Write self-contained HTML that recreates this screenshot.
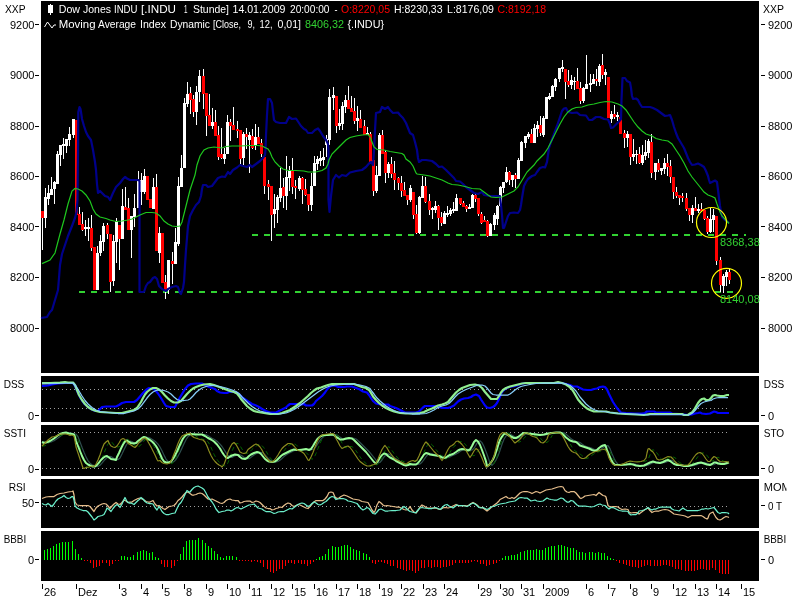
<!DOCTYPE html>
<html><head><meta charset="utf-8"><title>Chart</title>
<style>
html,body{margin:0;padding:0;background:#fff;}
body{width:800px;height:600px;overflow:hidden;}
svg{display:block;will-change:transform;}
text{font-family:"Liberation Sans",sans-serif;font-size:11px;}
</style></head><body>
<svg width="800" height="600" viewBox="0 0 800 600">
<rect x="0" y="0" width="800" height="600" fill="#fff"/>
<g shape-rendering="crispEdges" fill="#000">
<rect x="41" y="1" width="718" height="372"/>
<rect x="41" y="376" width="718" height="46"/>
<rect x="41" y="425" width="718" height="50.5"/>
<rect x="41" y="479" width="718" height="48.799999999999955"/>
<rect x="41" y="531" width="718" height="49.60000000000002"/>
</g>
<g stroke="#32d232" stroke-width="2" shape-rendering="crispEdges" fill="none">
<path d="M252 235H746" stroke-dasharray="6,6"/>
<path d="M79 292H735" stroke-dasharray="6,6"/>
</g>
<g shape-rendering="crispEdges">
<path d="M45.5 188V228M48.5 185V205M51.5 177V195M54.5 181V204M57.5 151V184M60.5 145V166M63.5 138V159M66.5 139V153M69.5 127V146M73.5 119V138M85.5 220V236M88.5 218V241M97.5 246V290M100.5 235V256M103.5 223V251M113.5 235V286M116.5 218V263M122.5 189V239M131.5 216V258M134.5 194V227M138.5 171V208M141.5 173V205M144.5 169V194M153.5 178V209M159.5 227V263M168.5 260V294M175.5 228V264M178.5 177V246M181.5 155V187M184.5 98V168M187.5 82V107M196.5 86V125M199.5 70V102M212.5 108V129M224.5 148V164M227.5 115V154M243.5 132V165M249.5 132V173M255.5 124V150M274.5 194V228M277.5 195V223M280.5 168V202M286.5 156V210M289.5 166V191M299.5 176V191M311.5 173V211M314.5 156V186M317.5 156V170M320.5 151V166M323.5 148V166M326.5 135V157M329.5 89V145M333.5 87V110M339.5 109V130M342.5 102V130M345.5 95V113M357.5 106V131M367.5 127V135M376.5 166V193M379.5 133V176M388.5 162V178M410.5 185V202M419.5 196V234M422.5 176V198M432.5 207V219M435.5 201V213M444.5 211V224M447.5 206V217M450.5 208V216M453.5 202V213M456.5 194V211M469.5 204V209M472.5 194V208M490.5 223V236M494.5 213V230M497.5 205V225M500.5 186V207M503.5 182V193M506.5 167V183M512.5 175V187M518.5 158V179M521.5 141V161M525.5 136V148M528.5 132V139M534.5 124V143M537.5 121V137M543.5 116V137M546.5 97V119M549.5 93V100M552.5 85V97M555.5 78V91M559.5 68V82M562.5 60V72M571.5 75V89M574.5 77V90M583.5 87V103M586.5 55V89M590.5 74V92M593.5 74V84M599.5 64V86M605.5 69V85M611.5 111V123M617.5 112V121M627.5 131V147M633.5 139V161M636.5 150V164M642.5 145V165M645.5 140V160M648.5 139V158M655.5 163V180M661.5 168V175M664.5 158V174M692.5 205V223M698.5 204V213M710.5 208V233M713.5 209V232M723.5 274V293M726.5 270V286M42.5 211V250M76.5 120V215M79.5 207V225M82.5 212V231M91.5 215V251M94.5 247V290M107.5 223V239M110.5 234V292M119.5 225V270M125.5 187V210M128.5 198V230M147.5 176V200M150.5 199V208M156.5 174V251M162.5 233V283M165.5 275V299M172.5 252V284M190.5 87V114M193.5 95V117M203.5 69V109M206.5 93V136M209.5 94V126M215.5 110V136M218.5 126V160M221.5 128V159M230.5 119V141M233.5 107V130M237.5 121V138M240.5 130V164M246.5 128V149M252.5 129V149M258.5 127V144M261.5 139V157M264.5 157V194M268.5 180V200M271.5 186V241M283.5 178V208M292.5 158V194M295.5 180V199M302.5 177V204M305.5 179V196M308.5 194V211M336.5 96V133M348.5 86V109M351.5 96V112M354.5 98V124M360.5 110V128M364.5 120V135M370.5 132V164M373.5 160V196M382.5 130V154M385.5 150V183M391.5 157V178M394.5 161V190M398.5 177V190M401.5 176V197M404.5 182V196M407.5 195V205M413.5 192V219M416.5 205V234M425.5 177V203M429.5 194V215M438.5 205V230M441.5 212V226M460.5 198V205M463.5 201V207M466.5 205V212M475.5 194V202M478.5 198V216M481.5 212V224M484.5 216V222M487.5 220V237M509.5 171V185M515.5 173V188M531.5 129V143M540.5 116V136M565.5 69V99M568.5 70V87M577.5 68V89M580.5 82V104M596.5 69V86M602.5 54V79M608.5 77V118M614.5 105V119M620.5 117V134M624.5 130V148M630.5 134V165M639.5 147V164M651.5 134V178M658.5 159V172M667.5 154V176M670.5 160V183M673.5 177V199M676.5 187V198M679.5 195V205M682.5 193V202M686.5 193V211M689.5 208V221M695.5 197V211M701.5 203V212M704.5 210V220M707.5 216V234M716.5 216V265M720.5 257V292M729.5 269V284" stroke="#fff" stroke-width="1" fill="none"/>
<path d="M44 197h3V218h-3zM47 193h3V199h-3zM50 189h3V195h-3zM53 182h3V189h-3zM56 154h3V184h-3zM59 145h3V155h-3zM62 144h3V146h-3zM65 139h3V146h-3zM68 134h3V140h-3zM72 119h3V135h-3zM84 227h3V229h-3zM87 227h3V229h-3zM96 253h3V290h-3zM99 241h3V253h-3zM102 226h3V242h-3zM112 241h3V281h-3zM115 221h3V242h-3zM121 206h3V239h-3zM130 216h3V230h-3zM133 208h3V217h-3zM137 180h3V208h-3zM140 180h3V192h-3zM143 176h3V192h-3zM152 187h3V209h-3zM158 233h3V253h-3zM167 260h3V290h-3zM174 242h3V264h-3zM177 186h3V244h-3zM180 168h3V187h-3zM183 103h3V168h-3zM186 94h3V104h-3zM195 92h3V112h-3zM198 76h3V92h-3zM211 122h3V126h-3zM223 154h3V159h-3zM226 122h3V154h-3zM242 134h3V158h-3zM248 135h3V140h-3zM254 137h3V145h-3zM273 209h3V214h-3zM276 197h3V210h-3zM279 188h3V198h-3zM285 177h3V196h-3zM288 170h3V178h-3zM298 178h3V189h-3zM310 186h3V205h-3zM313 163h3V186h-3zM316 159h3V164h-3zM319 158h3V161h-3zM322 157h3V160h-3zM325 139h3V145h-3zM328 97h3V140h-3zM332 95h3V98h-3zM338 123h3V126h-3zM341 106h3V124h-3zM344 100h3V107h-3zM356 118h3V121h-3zM366 133h3V135h-3zM375 175h3V191h-3zM378 135h3V176h-3zM387 164h3V173h-3zM409 188h3V200h-3zM418 197h3V233h-3zM421 186h3V198h-3zM431 208h3V210h-3zM434 206h3V210h-3zM443 213h3V224h-3zM446 213h3V215h-3zM449 210h3V214h-3zM452 209h3V211h-3zM455 198h3V211h-3zM468 207h3V209h-3zM471 195h3V208h-3zM489 224h3V236h-3zM493 215h3V225h-3zM496 206h3V219h-3zM499 187h3V206h-3zM502 182h3V188h-3zM505 172h3V182h-3zM511 175h3V180h-3zM517 160h3V179h-3zM520 142h3V161h-3zM524 136h3V143h-3zM527 134h3V137h-3zM533 128h3V143h-3zM536 125h3V129h-3zM542 118h3V135h-3zM545 97h3V119h-3zM548 96h3V99h-3zM551 86h3V97h-3zM554 79h3V87h-3zM558 68h3V79h-3zM561 67h3V69h-3zM570 80h3V85h-3zM573 81h3V82h-3zM582 88h3V101h-3zM585 84h3V89h-3zM589 83h3V85h-3zM592 79h3V84h-3zM598 66h3V82h-3zM604 72h3V75h-3zM610 114h3V119h-3zM616 115h3V117h-3zM626 134h3V138h-3zM632 154h3V157h-3zM635 154h3V155h-3zM641 155h3V163h-3zM644 152h3V156h-3zM647 141h3V153h-3zM654 163h3V172h-3zM660 168h3V171h-3zM663 163h3V169h-3zM691 208h3V215h-3zM697 209h3V211h-3zM709 219h3V232h-3zM712 215h3V220h-3zM722 276h3V286h-3zM725 272h3V277h-3z" fill="#fff"/>
<path d="M41 211h3V218h-3zM75 120h3V215h-3zM78 214h3V225h-3zM81 224h3V230h-3zM90 228h3V248h-3zM93 247h3V290h-3zM106 225h3V234h-3zM109 234h3V282h-3zM118 225h3V239h-3zM124 207h3V210h-3zM127 208h3V230h-3zM146 176h3V200h-3zM149 199h3V208h-3zM155 187h3V251h-3zM161 233h3V283h-3zM164 282h3V290h-3zM171 261h3V264h-3zM189 93h3V100h-3zM192 99h3V112h-3zM202 76h3V94h-3zM205 93h3V116h-3zM208 115h3V126h-3zM214 122h3V136h-3zM217 135h3V157h-3zM220 154h3V158h-3zM229 122h3V126h-3zM232 125h3V130h-3zM236 129h3V131h-3zM239 130h3V159h-3zM245 134h3V137h-3zM251 136h3V148h-3zM257 137h3V144h-3zM260 143h3V154h-3zM263 157h3V186h-3zM267 184h3V187h-3zM270 186h3V215h-3zM282 187h3V196h-3zM291 170h3V187h-3zM294 186h3V188h-3zM301 178h3V190h-3zM304 189h3V195h-3zM307 194h3V205h-3zM335 96h3V126h-3zM347 100h3V109h-3zM350 108h3V112h-3zM353 111h3V121h-3zM359 119h3V128h-3zM363 126h3V135h-3zM369 134h3V164h-3zM372 160h3V191h-3zM381 135h3V154h-3zM384 152h3V173h-3zM390 164h3V174h-3zM393 173h3V180h-3zM397 178h3V183h-3zM400 183h3V191h-3zM403 190h3V196h-3zM406 195h3V200h-3zM412 192h3V215h-3zM415 214h3V233h-3zM424 186h3V202h-3zM428 201h3V210h-3zM437 206h3V218h-3zM440 217h3V223h-3zM459 198h3V204h-3zM462 203h3V207h-3zM465 206h3V209h-3zM474 195h3V199h-3zM477 198h3V214h-3zM480 214h3V223h-3zM483 220h3V222h-3zM486 221h3V236h-3zM508 172h3V180h-3zM514 175h3V179h-3zM530 134h3V143h-3zM539 125h3V133h-3zM564 69h3V82h-3zM567 81h3V85h-3zM576 81h3V89h-3zM579 88h3V101h-3zM595 79h3V81h-3zM601 65h3V75h-3zM607 77h3V118h-3zM613 114h3V117h-3zM619 117h3V134h-3zM623 133h3V138h-3zM629 134h3V157h-3zM638 154h3V163h-3zM650 142h3V173h-3zM657 163h3V170h-3zM666 163h3V167h-3zM669 166h3V177h-3zM672 177h3V192h-3zM675 192h3V196h-3zM678 195h3V198h-3zM681 196h3V198h-3zM685 198h3V209h-3zM688 208h3V215h-3zM694 208h3V211h-3zM700 209h3V211h-3zM703 210h3V219h-3zM706 218h3V232h-3zM715 216h3V261h-3zM719 260h3V285h-3zM728 272h3V280h-3z" fill="#f00"/>
</g>
<path d="M41 318 L47 317 L50 312 L52 310 L55 300 L58 290 L59 278 L60 265 L62 254 L64 248 L68 236 L72 226 L75 218 L76.5 212 L77.5 200 L78 150 L78.3 112 L79.5 107 L80.5 109 L81 112 L82 119 L84 126 L86 132 L88 136 L91 140 L93 150 L95 162 L96 170 L97 184 L98 193 L100 191 L102 193 L105 196 L108 197 L110 200 L113 193 L116 187 L120 183 L123 179 L125 177 L127 178.5 L130 180 L134 180 L138 180 L139.5 181 L139.5 292 L141 292 L144 292 L146 286 L148 283 L150 282 L153 278 L155 277 L157 279 L159 286 L162 289 L166 291 L168 289 L172 287 L176 286 L178 287 L180 293 L181 294 L183 288 L184 282 L185 265 L186 250 L187 238 L188 226 L190 216 L193 210 L196 205 L199 202 L201 196 L202 189 L203 185 L206 185 L208 187 L212 186 L215 182 L218 178 L222 176.5 L225 177 L228 172 L230 174 L233 170 L237 167.5 L240 165 L243 166 L247 167 L250 165 L252 167 L256 164 L260 161 L263 158 L265 155 L265.5 150 L266 135 L267 115 L268 99 L270 99 L272 103 L273 112 L274 120 L276 122 L280 123 L286 123 L289 117 L292 119 L296 118.5 L299 123 L301 126 L304 129 L306 130 L308 133 L312 133 L315 130 L318 128.5 L320 131 L323 136 L326 140 L328 144 L328.5 150 L328.5 200 L329.5 212 L331 196 L332 188 L333 180 L336 175 L339 177.5 L342 175 L346 176 L350 172.5 L356 171 L362 170 L366 167 L369 163.5 L371 162 L373 165 L374 150 L375 130 L376 113 L380 112 L382 107 L385 109 L388 107 L390 110 L393 113 L398 112.5 L400 115 L403 118 L406 123 L408 128 L410 133 L413 135 L415 142 L417 150 L418 158 L419 162 L422 160 L426 160 L432 161 L436 164 L439 167 L442 166.5 L446 170 L450 174 L454 178 L456 181 L460 181.5 L463 184 L466 187 L470 190 L474 193 L478 194 L482 192 L484 195 L490 196 L496 196 L500 196 L501 205 L502 215 L503 228 L504 228 L506 222 L508 216 L510 213 L514 212.5 L518 213 L520 210 L521 205 L522 198 L523 192 L524 186 L526 182 L528 179 L532 176 L535 175 L537 172 L540 168 L543 167 L545 167.5 L547 162 L548 155 L549 148 L551 142 L554 134 L557 126 L560 117 L562 111 L564 108.5 L566 108 L568 112 L572 113 L577 112.5 L580 115 L586 115.5 L589 120 L592 120 L596 117 L600 117 L604 119 L608 119.5 L610 124 L611 128 L613 127.5 L616 124.5 L619 121.5 L621 119 L621.5 100 L622.5 78 L625 78 L627 81 L630 82.5 L631 88 L632 96 L633 99 L636 98.5 L638 100 L640 104 L642 107 L646 107 L650 107 L653 108 L657 110 L661 113 L665 116 L668 115.5 L670 115 L672 120 L674 127 L676 133 L678 138 L681 143 L684 148 L686 153 L688 158 L690 162 L692 165 L695 164.5 L698 163.5 L701 165 L704 167 L706 171 L708 176 L709 180 L710 183 L712 182 L715 180.5 L717 182 L718 190 L719 198 L720 206 L721 212 L722 217 L724 219 L726 220.5 L729 223" stroke="#00008b" stroke-width="2.2" fill="none" stroke-linejoin="round"/>
<path d="M42 263.6 L50 260 L55 253 L60 234 L64 220 L68 204 L72 191 L75 188.5 L78 189 L82 191 L86 195 L90 201 L93 209 L96 214 L100 217 L106 218.5 L110 220 L116 221.5 L122 221 L128 220 L132 219 L136 217 L140 215 L146 212.5 L152 212.5 L156 213 L160 216 L164 221 L168 224 L172 226 L176 226.5 L180 226 L182 222 L184 214 L187 202 L190 190 L195 175 L197 165 L200 156 L204 150 L208 148 L214 147 L222 148 L226 146.5 L232 146 L240 146 L250 145.5 L258 145.5 L262 146 L266 148 L268 149 L270 152 L272 157 L275 162 L279 166 L283 169 L288 170.5 L296 170.5 L304 171 L308 172 L316 172 L322 170.5 L326 168 L328 164 L329 160 L332 154 L336 150 L342 144 L346 140 L350 137.5 L356 136 L362 135 L368 134.5 L370 137 L372 142 L374 147 L377 149.5 L384 150 L390 151.5 L396 152.5 L402 153.5 L404 155 L406 159 L410 162 L413 166 L416 173 L417 174 L424 175 L430 176 L436 178 L442 180 L448 183 L452 184.5 L458 185 L465 186.5 L472 188.5 L480 189 L484 192 L488 195 L491 197 L496 197.5 L502 197 L506 195 L510 193 L514 191 L518 187 L521 182 L524 177 L527 172 L530 169 L534 165 L537 161 L540 158 L544 154 L548 148 L552 140 L556 132 L560 124 L564 117 L568 112 L572 109 L576 107.5 L582 107 L588 105 L594 104 L600 102.5 L606 101.5 L612 102 L618 104 L622 106 L626 110 L630 116 L634 122 L638 127 L642 131 L646 134 L652 136 L656 138.5 L662 140 L668 141 L672 144 L676 150 L680 156 L684 163 L688 171 L692 177 L696 182 L700 187 L704 192 L708 195 L712 196.5 L715 198 L717 204 L720 212 L722 216 L725 219 L729 223.5" stroke="#1ec81e" stroke-width="1.2" fill="none"/>
<circle cx="711.5" cy="222.5" r="15" stroke="#ffff00" stroke-width="1.2" fill="none"/>
<circle cx="726.5" cy="283.3" r="15" stroke="#ffff00" stroke-width="1.2" fill="none"/>
<text x="720" y="246" fill="#32d232">8368,38</text>
<text x="720" y="303" fill="#32d232">8140,08</text>
<rect x="48" y="5" width="5" height="8" fill="#fff" shape-rendering="crispEdges"/><rect x="50" y="4" width="1" height="11" fill="#fff" shape-rendering="crispEdges"/>
<text x="58.75" y="13" fill="#fff" textLength="21.25" lengthAdjust="spacingAndGlyphs">Dow</text>
<text x="83" y="13" fill="#fff" textLength="28" lengthAdjust="spacingAndGlyphs">Jones</text>
<text x="114" y="13" fill="#fff" textLength="23.5" lengthAdjust="spacingAndGlyphs">INDU</text>
<text x="141" y="13" fill="#fff" textLength="35" lengthAdjust="spacingAndGlyphs">[.INDU</text>
<text x="184" y="13" fill="#fff" textLength="3.5" lengthAdjust="spacingAndGlyphs">1</text>
<text x="193" y="13" fill="#fff" textLength="36" lengthAdjust="spacingAndGlyphs">Stunde]</text>
<text x="232.5" y="13" fill="#fff" textLength="53" lengthAdjust="spacingAndGlyphs">14.01.2009</text>
<text x="290" y="13" fill="#fff" textLength="39.5" lengthAdjust="spacingAndGlyphs">20:00:00</text>
<text x="334.5" y="13" fill="#fff" textLength="3" lengthAdjust="spacingAndGlyphs">-</text>
<text x="341" y="13" fill="#f00" textLength="49" lengthAdjust="spacingAndGlyphs">O:8220,05</text>
<text x="394" y="13" fill="#fff" textLength="48.5" lengthAdjust="spacingAndGlyphs">H:8230,33</text>
<text x="447" y="13" fill="#fff" textLength="47" lengthAdjust="spacingAndGlyphs">L:8176,09</text>
<text x="497.5" y="13" fill="#f00" textLength="48.5" lengthAdjust="spacingAndGlyphs">C:8192,18</text>
<path d="M44.5 27 l3 -5 l4.5 6 l2 -3 l2 0" stroke="#fff" stroke-width="1" fill="none"/>
<text x="58.75" y="28.4" fill="#fff" textLength="36.75" lengthAdjust="spacingAndGlyphs">Moving</text>
<text x="98" y="28.4" fill="#fff" textLength="38" lengthAdjust="spacingAndGlyphs">Average</text>
<text x="140" y="28.4" fill="#fff" textLength="26" lengthAdjust="spacingAndGlyphs">Index</text>
<text x="170" y="28.4" fill="#fff" textLength="40" lengthAdjust="spacingAndGlyphs">Dynamic</text>
<text x="213" y="28.4" fill="#fff" textLength="28" lengthAdjust="spacingAndGlyphs">[Close,</text>
<text x="247.5" y="28.4" fill="#fff" textLength="7.5" lengthAdjust="spacingAndGlyphs">9,</text>
<text x="259.5" y="28.4" fill="#fff" textLength="13" lengthAdjust="spacingAndGlyphs">12,</text>
<text x="277.5" y="28.4" fill="#fff" textLength="23.5" lengthAdjust="spacingAndGlyphs">0,01]</text>
<text x="305" y="28.4" fill="#32d232" textLength="39" lengthAdjust="spacingAndGlyphs">8406,32</text>
<text x="347.5" y="28.4" fill="#fff" textLength="36.5" lengthAdjust="spacingAndGlyphs">{.INDU}</text>
<g fill="#000">
<text x="5" y="13" textLength="20.5" lengthAdjust="spacingAndGlyphs">XXP</text><text x="763" y="13" textLength="21" lengthAdjust="spacingAndGlyphs">XXP</text>
<text x="10" y="28.5">9200</text><rect x="35" y="24" width="4" height="1" shape-rendering="crispEdges"/>
<text x="768" y="28.5">9200</text><rect x="761" y="24" width="4" height="1" shape-rendering="crispEdges"/>
<text x="10" y="79.0">9000</text><rect x="35" y="75" width="4" height="1" shape-rendering="crispEdges"/>
<text x="768" y="79.0">9000</text><rect x="761" y="75" width="4" height="1" shape-rendering="crispEdges"/>
<text x="10" y="129.5">8800</text><rect x="35" y="126" width="4" height="1" shape-rendering="crispEdges"/>
<text x="768" y="129.5">8800</text><rect x="761" y="126" width="4" height="1" shape-rendering="crispEdges"/>
<text x="10" y="180.0">8600</text><rect x="35" y="176" width="4" height="1" shape-rendering="crispEdges"/>
<text x="768" y="180.0">8600</text><rect x="761" y="176" width="4" height="1" shape-rendering="crispEdges"/>
<text x="10" y="230.5">8400</text><rect x="35" y="226" width="4" height="1" shape-rendering="crispEdges"/>
<text x="768" y="230.5">8400</text><rect x="761" y="226" width="4" height="1" shape-rendering="crispEdges"/>
<text x="10" y="281.0">8200</text><rect x="35" y="277" width="4" height="1" shape-rendering="crispEdges"/>
<text x="768" y="281.0">8200</text><rect x="761" y="277" width="4" height="1" shape-rendering="crispEdges"/>
<text x="10" y="331.5">8000</text><rect x="35" y="328" width="4" height="1" shape-rendering="crispEdges"/>
<text x="768" y="331.5">8000</text><rect x="761" y="328" width="4" height="1" shape-rendering="crispEdges"/>
<text x="3.7" y="388" textLength="20.6" lengthAdjust="spacingAndGlyphs">DSS</text><text x="763.7" y="388" textLength="20.6" lengthAdjust="spacingAndGlyphs">DSS</text>
<text x="28" y="420">0</text><rect x="35" y="415" width="4" height="1" shape-rendering="crispEdges"/>
<text x="768" y="420">0</text><rect x="761" y="415" width="4" height="1" shape-rendering="crispEdges"/>
<text x="3.7" y="437" textLength="22.3" lengthAdjust="spacingAndGlyphs">SSTI</text><text x="763.7" y="437" textLength="20.5" lengthAdjust="spacingAndGlyphs">STO</text>
<text x="28" y="473">0</text><rect x="35" y="469" width="4" height="1" shape-rendering="crispEdges"/>
<text x="768" y="473">0</text><rect x="761" y="468" width="4" height="1" shape-rendering="crispEdges"/>
<text x="8.7" y="491" textLength="17" lengthAdjust="spacingAndGlyphs">RSI</text><text x="763.7" y="491" textLength="27" lengthAdjust="spacingAndGlyphs">MOM</text>
<text x="22" y="507">50</text><rect x="35" y="502" width="4" height="1" shape-rendering="crispEdges"/>
<text x="768" y="510" textLength="14" lengthAdjust="spacingAndGlyphs">0 T</text><rect x="761" y="505" width="4" height="1" shape-rendering="crispEdges"/>
<text x="3.7" y="543" textLength="22.5" lengthAdjust="spacingAndGlyphs">BBBI</text><text x="763.7" y="543" textLength="22.5" lengthAdjust="spacingAndGlyphs">BBBI</text>
<text x="28" y="564">0</text><rect x="35" y="559" width="4" height="1" shape-rendering="crispEdges"/>
<text x="768" y="564">0</text><rect x="761" y="559" width="4" height="1" shape-rendering="crispEdges"/>
<rect x="42" y="584" width="1" height="5" shape-rendering="crispEdges"/><text x="44" y="596.4">26</text>
<rect x="76" y="584" width="1" height="5" shape-rendering="crispEdges"/><text x="78" y="596.4">Dez</text>
<rect x="119" y="584" width="1" height="5" shape-rendering="crispEdges"/><text x="121" y="596.4">3</text>
<rect x="141" y="584" width="1" height="5" shape-rendering="crispEdges"/><text x="143" y="596.4">4</text>
<rect x="162" y="584" width="1" height="5" shape-rendering="crispEdges"/><text x="164" y="596.4">5</text>
<rect x="184" y="584" width="1" height="5" shape-rendering="crispEdges"/><text x="186" y="596.4">8</text>
<rect x="206" y="584" width="1" height="5" shape-rendering="crispEdges"/><text x="208" y="596.4">9</text>
<rect x="227" y="584" width="1" height="5" shape-rendering="crispEdges"/><text x="229" y="596.4">10</text>
<rect x="249" y="584" width="1" height="5" shape-rendering="crispEdges"/><text x="251" y="596.4">11</text>
<rect x="271" y="584" width="1" height="5" shape-rendering="crispEdges"/><text x="273" y="596.4">12</text>
<rect x="292" y="584" width="1" height="5" shape-rendering="crispEdges"/><text x="294" y="596.4">15</text>
<rect x="314" y="584" width="1" height="5" shape-rendering="crispEdges"/><text x="316" y="596.4">16</text>
<rect x="336" y="584" width="1" height="5" shape-rendering="crispEdges"/><text x="338" y="596.4">17</text>
<rect x="357" y="584" width="1" height="5" shape-rendering="crispEdges"/><text x="359" y="596.4">18</text>
<rect x="379" y="584" width="1" height="5" shape-rendering="crispEdges"/><text x="381" y="596.4">19</text>
<rect x="401" y="584" width="1" height="5" shape-rendering="crispEdges"/><text x="403" y="596.4">22</text>
<rect x="423" y="584" width="1" height="5" shape-rendering="crispEdges"/><text x="425" y="596.4">23</text>
<rect x="444" y="584" width="1" height="5" shape-rendering="crispEdges"/><text x="446" y="596.4">24</text>
<rect x="478" y="584" width="1" height="5" shape-rendering="crispEdges"/><text x="480" y="596.4">29</text>
<rect x="500" y="584" width="1" height="5" shape-rendering="crispEdges"/><text x="502" y="596.4">30</text>
<rect x="521" y="584" width="1" height="5" shape-rendering="crispEdges"/><text x="523" y="596.4">31</text>
<rect x="543" y="584" width="1" height="5" shape-rendering="crispEdges"/><text x="545" y="596.4">2009</text>
<rect x="586" y="584" width="1" height="5" shape-rendering="crispEdges"/><text x="588" y="596.4">6</text>
<rect x="608" y="584" width="1" height="5" shape-rendering="crispEdges"/><text x="610" y="596.4">7</text>
<rect x="630" y="584" width="1" height="5" shape-rendering="crispEdges"/><text x="632" y="596.4">8</text>
<rect x="651" y="584" width="1" height="5" shape-rendering="crispEdges"/><text x="653" y="596.4">9</text>
<rect x="673" y="584" width="1" height="5" shape-rendering="crispEdges"/><text x="675" y="596.4">12</text>
<rect x="695" y="584" width="1" height="5" shape-rendering="crispEdges"/><text x="697" y="596.4">13</text>
<rect x="716" y="584" width="1" height="5" shape-rendering="crispEdges"/><text x="718" y="596.4">14</text>
<rect x="741" y="584" width="1" height="5" shape-rendering="crispEdges"/><text x="743" y="596.4">15</text>
</g>
<rect x="786.5" y="480" width="13.5" height="14" fill="#fff"/>
<path d="M42 389h1v1h-1zM46 389h1v1h-1zM50 389h1v1h-1zM54 389h1v1h-1zM58 389h1v1h-1zM62 389h1v1h-1zM66 389h1v1h-1zM70 389h1v1h-1zM74 389h1v1h-1zM78 389h1v1h-1zM82 389h1v1h-1zM86 389h1v1h-1zM90 389h1v1h-1zM94 389h1v1h-1zM98 389h1v1h-1zM102 389h1v1h-1zM106 389h1v1h-1zM110 389h1v1h-1zM114 389h1v1h-1zM118 389h1v1h-1zM122 389h1v1h-1zM126 389h1v1h-1zM130 389h1v1h-1zM134 389h1v1h-1zM138 389h1v1h-1zM142 389h1v1h-1zM146 389h1v1h-1zM150 389h1v1h-1zM154 389h1v1h-1zM158 389h1v1h-1zM162 389h1v1h-1zM166 389h1v1h-1zM170 389h1v1h-1zM174 389h1v1h-1zM178 389h1v1h-1zM182 389h1v1h-1zM186 389h1v1h-1zM190 389h1v1h-1zM194 389h1v1h-1zM198 389h1v1h-1zM202 389h1v1h-1zM206 389h1v1h-1zM210 389h1v1h-1zM214 389h1v1h-1zM218 389h1v1h-1zM222 389h1v1h-1zM226 389h1v1h-1zM230 389h1v1h-1zM234 389h1v1h-1zM238 389h1v1h-1zM242 389h1v1h-1zM246 389h1v1h-1zM250 389h1v1h-1zM254 389h1v1h-1zM258 389h1v1h-1zM262 389h1v1h-1zM266 389h1v1h-1zM270 389h1v1h-1zM274 389h1v1h-1zM278 389h1v1h-1zM282 389h1v1h-1zM286 389h1v1h-1zM290 389h1v1h-1zM294 389h1v1h-1zM298 389h1v1h-1zM302 389h1v1h-1zM306 389h1v1h-1zM310 389h1v1h-1zM314 389h1v1h-1zM318 389h1v1h-1zM322 389h1v1h-1zM326 389h1v1h-1zM330 389h1v1h-1zM334 389h1v1h-1zM338 389h1v1h-1zM342 389h1v1h-1zM346 389h1v1h-1zM350 389h1v1h-1zM354 389h1v1h-1zM358 389h1v1h-1zM362 389h1v1h-1zM366 389h1v1h-1zM370 389h1v1h-1zM374 389h1v1h-1zM378 389h1v1h-1zM382 389h1v1h-1zM386 389h1v1h-1zM390 389h1v1h-1zM394 389h1v1h-1zM398 389h1v1h-1zM402 389h1v1h-1zM406 389h1v1h-1zM410 389h1v1h-1zM414 389h1v1h-1zM418 389h1v1h-1zM422 389h1v1h-1zM426 389h1v1h-1zM430 389h1v1h-1zM434 389h1v1h-1zM438 389h1v1h-1zM442 389h1v1h-1zM446 389h1v1h-1zM450 389h1v1h-1zM454 389h1v1h-1zM458 389h1v1h-1zM462 389h1v1h-1zM466 389h1v1h-1zM470 389h1v1h-1zM474 389h1v1h-1zM478 389h1v1h-1zM482 389h1v1h-1zM486 389h1v1h-1zM490 389h1v1h-1zM494 389h1v1h-1zM498 389h1v1h-1zM502 389h1v1h-1zM506 389h1v1h-1zM510 389h1v1h-1zM514 389h1v1h-1zM518 389h1v1h-1zM522 389h1v1h-1zM526 389h1v1h-1zM530 389h1v1h-1zM534 389h1v1h-1zM538 389h1v1h-1zM542 389h1v1h-1zM546 389h1v1h-1zM550 389h1v1h-1zM554 389h1v1h-1zM558 389h1v1h-1zM562 389h1v1h-1zM566 389h1v1h-1zM570 389h1v1h-1zM574 389h1v1h-1zM578 389h1v1h-1zM582 389h1v1h-1zM586 389h1v1h-1zM590 389h1v1h-1zM594 389h1v1h-1zM598 389h1v1h-1zM602 389h1v1h-1zM606 389h1v1h-1zM610 389h1v1h-1zM614 389h1v1h-1zM618 389h1v1h-1zM622 389h1v1h-1zM626 389h1v1h-1zM630 389h1v1h-1zM634 389h1v1h-1zM638 389h1v1h-1zM642 389h1v1h-1zM646 389h1v1h-1zM650 389h1v1h-1zM654 389h1v1h-1zM658 389h1v1h-1zM662 389h1v1h-1zM666 389h1v1h-1zM670 389h1v1h-1zM674 389h1v1h-1zM678 389h1v1h-1zM682 389h1v1h-1zM686 389h1v1h-1zM690 389h1v1h-1zM694 389h1v1h-1zM698 389h1v1h-1zM702 389h1v1h-1zM706 389h1v1h-1zM710 389h1v1h-1zM714 389h1v1h-1zM718 389h1v1h-1zM722 389h1v1h-1zM726 389h1v1h-1zM42 408h1v1h-1zM46 408h1v1h-1zM50 408h1v1h-1zM54 408h1v1h-1zM58 408h1v1h-1zM62 408h1v1h-1zM66 408h1v1h-1zM70 408h1v1h-1zM74 408h1v1h-1zM78 408h1v1h-1zM82 408h1v1h-1zM86 408h1v1h-1zM90 408h1v1h-1zM94 408h1v1h-1zM98 408h1v1h-1zM102 408h1v1h-1zM106 408h1v1h-1zM110 408h1v1h-1zM114 408h1v1h-1zM118 408h1v1h-1zM122 408h1v1h-1zM126 408h1v1h-1zM130 408h1v1h-1zM134 408h1v1h-1zM138 408h1v1h-1zM142 408h1v1h-1zM146 408h1v1h-1zM150 408h1v1h-1zM154 408h1v1h-1zM158 408h1v1h-1zM162 408h1v1h-1zM166 408h1v1h-1zM170 408h1v1h-1zM174 408h1v1h-1zM178 408h1v1h-1zM182 408h1v1h-1zM186 408h1v1h-1zM190 408h1v1h-1zM194 408h1v1h-1zM198 408h1v1h-1zM202 408h1v1h-1zM206 408h1v1h-1zM210 408h1v1h-1zM214 408h1v1h-1zM218 408h1v1h-1zM222 408h1v1h-1zM226 408h1v1h-1zM230 408h1v1h-1zM234 408h1v1h-1zM238 408h1v1h-1zM242 408h1v1h-1zM246 408h1v1h-1zM250 408h1v1h-1zM254 408h1v1h-1zM258 408h1v1h-1zM262 408h1v1h-1zM266 408h1v1h-1zM270 408h1v1h-1zM274 408h1v1h-1zM278 408h1v1h-1zM282 408h1v1h-1zM286 408h1v1h-1zM290 408h1v1h-1zM294 408h1v1h-1zM298 408h1v1h-1zM302 408h1v1h-1zM306 408h1v1h-1zM310 408h1v1h-1zM314 408h1v1h-1zM318 408h1v1h-1zM322 408h1v1h-1zM326 408h1v1h-1zM330 408h1v1h-1zM334 408h1v1h-1zM338 408h1v1h-1zM342 408h1v1h-1zM346 408h1v1h-1zM350 408h1v1h-1zM354 408h1v1h-1zM358 408h1v1h-1zM362 408h1v1h-1zM366 408h1v1h-1zM370 408h1v1h-1zM374 408h1v1h-1zM378 408h1v1h-1zM382 408h1v1h-1zM386 408h1v1h-1zM390 408h1v1h-1zM394 408h1v1h-1zM398 408h1v1h-1zM402 408h1v1h-1zM406 408h1v1h-1zM410 408h1v1h-1zM414 408h1v1h-1zM418 408h1v1h-1zM422 408h1v1h-1zM426 408h1v1h-1zM430 408h1v1h-1zM434 408h1v1h-1zM438 408h1v1h-1zM442 408h1v1h-1zM446 408h1v1h-1zM450 408h1v1h-1zM454 408h1v1h-1zM458 408h1v1h-1zM462 408h1v1h-1zM466 408h1v1h-1zM470 408h1v1h-1zM474 408h1v1h-1zM478 408h1v1h-1zM482 408h1v1h-1zM486 408h1v1h-1zM490 408h1v1h-1zM494 408h1v1h-1zM498 408h1v1h-1zM502 408h1v1h-1zM506 408h1v1h-1zM510 408h1v1h-1zM514 408h1v1h-1zM518 408h1v1h-1zM522 408h1v1h-1zM526 408h1v1h-1zM530 408h1v1h-1zM534 408h1v1h-1zM538 408h1v1h-1zM542 408h1v1h-1zM546 408h1v1h-1zM550 408h1v1h-1zM554 408h1v1h-1zM558 408h1v1h-1zM562 408h1v1h-1zM566 408h1v1h-1zM570 408h1v1h-1zM574 408h1v1h-1zM578 408h1v1h-1zM582 408h1v1h-1zM586 408h1v1h-1zM590 408h1v1h-1zM594 408h1v1h-1zM598 408h1v1h-1zM602 408h1v1h-1zM606 408h1v1h-1zM610 408h1v1h-1zM614 408h1v1h-1zM618 408h1v1h-1zM622 408h1v1h-1zM626 408h1v1h-1zM630 408h1v1h-1zM634 408h1v1h-1zM638 408h1v1h-1zM642 408h1v1h-1zM646 408h1v1h-1zM650 408h1v1h-1zM654 408h1v1h-1zM658 408h1v1h-1zM662 408h1v1h-1zM666 408h1v1h-1zM670 408h1v1h-1zM674 408h1v1h-1zM678 408h1v1h-1zM682 408h1v1h-1zM686 408h1v1h-1zM690 408h1v1h-1zM694 408h1v1h-1zM698 408h1v1h-1zM702 408h1v1h-1zM706 408h1v1h-1zM710 408h1v1h-1zM714 408h1v1h-1zM718 408h1v1h-1zM722 408h1v1h-1zM726 408h1v1h-1zM42 432h1v1h-1zM46 432h1v1h-1zM50 432h1v1h-1zM54 432h1v1h-1zM58 432h1v1h-1zM62 432h1v1h-1zM66 432h1v1h-1zM70 432h1v1h-1zM74 432h1v1h-1zM78 432h1v1h-1zM82 432h1v1h-1zM86 432h1v1h-1zM90 432h1v1h-1zM94 432h1v1h-1zM98 432h1v1h-1zM102 432h1v1h-1zM106 432h1v1h-1zM110 432h1v1h-1zM114 432h1v1h-1zM118 432h1v1h-1zM122 432h1v1h-1zM126 432h1v1h-1zM130 432h1v1h-1zM134 432h1v1h-1zM138 432h1v1h-1zM142 432h1v1h-1zM146 432h1v1h-1zM150 432h1v1h-1zM154 432h1v1h-1zM158 432h1v1h-1zM162 432h1v1h-1zM166 432h1v1h-1zM170 432h1v1h-1zM174 432h1v1h-1zM178 432h1v1h-1zM182 432h1v1h-1zM186 432h1v1h-1zM190 432h1v1h-1zM194 432h1v1h-1zM198 432h1v1h-1zM202 432h1v1h-1zM206 432h1v1h-1zM210 432h1v1h-1zM214 432h1v1h-1zM218 432h1v1h-1zM222 432h1v1h-1zM226 432h1v1h-1zM230 432h1v1h-1zM234 432h1v1h-1zM238 432h1v1h-1zM242 432h1v1h-1zM246 432h1v1h-1zM250 432h1v1h-1zM254 432h1v1h-1zM258 432h1v1h-1zM262 432h1v1h-1zM266 432h1v1h-1zM270 432h1v1h-1zM274 432h1v1h-1zM278 432h1v1h-1zM282 432h1v1h-1zM286 432h1v1h-1zM290 432h1v1h-1zM294 432h1v1h-1zM298 432h1v1h-1zM302 432h1v1h-1zM306 432h1v1h-1zM310 432h1v1h-1zM314 432h1v1h-1zM318 432h1v1h-1zM322 432h1v1h-1zM326 432h1v1h-1zM330 432h1v1h-1zM334 432h1v1h-1zM338 432h1v1h-1zM342 432h1v1h-1zM346 432h1v1h-1zM350 432h1v1h-1zM354 432h1v1h-1zM358 432h1v1h-1zM362 432h1v1h-1zM366 432h1v1h-1zM370 432h1v1h-1zM374 432h1v1h-1zM378 432h1v1h-1zM382 432h1v1h-1zM386 432h1v1h-1zM390 432h1v1h-1zM394 432h1v1h-1zM398 432h1v1h-1zM402 432h1v1h-1zM406 432h1v1h-1zM410 432h1v1h-1zM414 432h1v1h-1zM418 432h1v1h-1zM422 432h1v1h-1zM426 432h1v1h-1zM430 432h1v1h-1zM434 432h1v1h-1zM438 432h1v1h-1zM442 432h1v1h-1zM446 432h1v1h-1zM450 432h1v1h-1zM454 432h1v1h-1zM458 432h1v1h-1zM462 432h1v1h-1zM466 432h1v1h-1zM470 432h1v1h-1zM474 432h1v1h-1zM478 432h1v1h-1zM482 432h1v1h-1zM486 432h1v1h-1zM490 432h1v1h-1zM494 432h1v1h-1zM498 432h1v1h-1zM502 432h1v1h-1zM506 432h1v1h-1zM510 432h1v1h-1zM514 432h1v1h-1zM518 432h1v1h-1zM522 432h1v1h-1zM526 432h1v1h-1zM530 432h1v1h-1zM534 432h1v1h-1zM538 432h1v1h-1zM542 432h1v1h-1zM546 432h1v1h-1zM550 432h1v1h-1zM554 432h1v1h-1zM558 432h1v1h-1zM562 432h1v1h-1zM566 432h1v1h-1zM570 432h1v1h-1zM574 432h1v1h-1zM578 432h1v1h-1zM582 432h1v1h-1zM586 432h1v1h-1zM590 432h1v1h-1zM594 432h1v1h-1zM598 432h1v1h-1zM602 432h1v1h-1zM606 432h1v1h-1zM610 432h1v1h-1zM614 432h1v1h-1zM618 432h1v1h-1zM622 432h1v1h-1zM626 432h1v1h-1zM630 432h1v1h-1zM634 432h1v1h-1zM638 432h1v1h-1zM642 432h1v1h-1zM646 432h1v1h-1zM650 432h1v1h-1zM654 432h1v1h-1zM658 432h1v1h-1zM662 432h1v1h-1zM666 432h1v1h-1zM670 432h1v1h-1zM674 432h1v1h-1zM678 432h1v1h-1zM682 432h1v1h-1zM686 432h1v1h-1zM690 432h1v1h-1zM694 432h1v1h-1zM698 432h1v1h-1zM702 432h1v1h-1zM706 432h1v1h-1zM710 432h1v1h-1zM714 432h1v1h-1zM718 432h1v1h-1zM722 432h1v1h-1zM726 432h1v1h-1zM42 468h1v1h-1zM46 468h1v1h-1zM50 468h1v1h-1zM54 468h1v1h-1zM58 468h1v1h-1zM62 468h1v1h-1zM66 468h1v1h-1zM70 468h1v1h-1zM74 468h1v1h-1zM78 468h1v1h-1zM82 468h1v1h-1zM86 468h1v1h-1zM90 468h1v1h-1zM94 468h1v1h-1zM98 468h1v1h-1zM102 468h1v1h-1zM106 468h1v1h-1zM110 468h1v1h-1zM114 468h1v1h-1zM118 468h1v1h-1zM122 468h1v1h-1zM126 468h1v1h-1zM130 468h1v1h-1zM134 468h1v1h-1zM138 468h1v1h-1zM142 468h1v1h-1zM146 468h1v1h-1zM150 468h1v1h-1zM154 468h1v1h-1zM158 468h1v1h-1zM162 468h1v1h-1zM166 468h1v1h-1zM170 468h1v1h-1zM174 468h1v1h-1zM178 468h1v1h-1zM182 468h1v1h-1zM186 468h1v1h-1zM190 468h1v1h-1zM194 468h1v1h-1zM198 468h1v1h-1zM202 468h1v1h-1zM206 468h1v1h-1zM210 468h1v1h-1zM214 468h1v1h-1zM218 468h1v1h-1zM222 468h1v1h-1zM226 468h1v1h-1zM230 468h1v1h-1zM234 468h1v1h-1zM238 468h1v1h-1zM242 468h1v1h-1zM246 468h1v1h-1zM250 468h1v1h-1zM254 468h1v1h-1zM258 468h1v1h-1zM262 468h1v1h-1zM266 468h1v1h-1zM270 468h1v1h-1zM274 468h1v1h-1zM278 468h1v1h-1zM282 468h1v1h-1zM286 468h1v1h-1zM290 468h1v1h-1zM294 468h1v1h-1zM298 468h1v1h-1zM302 468h1v1h-1zM306 468h1v1h-1zM310 468h1v1h-1zM314 468h1v1h-1zM318 468h1v1h-1zM322 468h1v1h-1zM326 468h1v1h-1zM330 468h1v1h-1zM334 468h1v1h-1zM338 468h1v1h-1zM342 468h1v1h-1zM346 468h1v1h-1zM350 468h1v1h-1zM354 468h1v1h-1zM358 468h1v1h-1zM362 468h1v1h-1zM366 468h1v1h-1zM370 468h1v1h-1zM374 468h1v1h-1zM378 468h1v1h-1zM382 468h1v1h-1zM386 468h1v1h-1zM390 468h1v1h-1zM394 468h1v1h-1zM398 468h1v1h-1zM402 468h1v1h-1zM406 468h1v1h-1zM410 468h1v1h-1zM414 468h1v1h-1zM418 468h1v1h-1zM422 468h1v1h-1zM426 468h1v1h-1zM430 468h1v1h-1zM434 468h1v1h-1zM438 468h1v1h-1zM442 468h1v1h-1zM446 468h1v1h-1zM450 468h1v1h-1zM454 468h1v1h-1zM458 468h1v1h-1zM462 468h1v1h-1zM466 468h1v1h-1zM470 468h1v1h-1zM474 468h1v1h-1zM478 468h1v1h-1zM482 468h1v1h-1zM486 468h1v1h-1zM490 468h1v1h-1zM494 468h1v1h-1zM498 468h1v1h-1zM502 468h1v1h-1zM506 468h1v1h-1zM510 468h1v1h-1zM514 468h1v1h-1zM518 468h1v1h-1zM522 468h1v1h-1zM526 468h1v1h-1zM530 468h1v1h-1zM534 468h1v1h-1zM538 468h1v1h-1zM542 468h1v1h-1zM546 468h1v1h-1zM550 468h1v1h-1zM554 468h1v1h-1zM558 468h1v1h-1zM562 468h1v1h-1zM566 468h1v1h-1zM570 468h1v1h-1zM574 468h1v1h-1zM578 468h1v1h-1zM582 468h1v1h-1zM586 468h1v1h-1zM590 468h1v1h-1zM594 468h1v1h-1zM598 468h1v1h-1zM602 468h1v1h-1zM606 468h1v1h-1zM610 468h1v1h-1zM614 468h1v1h-1zM618 468h1v1h-1zM622 468h1v1h-1zM626 468h1v1h-1zM630 468h1v1h-1zM634 468h1v1h-1zM638 468h1v1h-1zM642 468h1v1h-1zM646 468h1v1h-1zM650 468h1v1h-1zM654 468h1v1h-1zM658 468h1v1h-1zM662 468h1v1h-1zM666 468h1v1h-1zM670 468h1v1h-1zM674 468h1v1h-1zM678 468h1v1h-1zM682 468h1v1h-1zM686 468h1v1h-1zM690 468h1v1h-1zM694 468h1v1h-1zM698 468h1v1h-1zM702 468h1v1h-1zM706 468h1v1h-1zM710 468h1v1h-1zM714 468h1v1h-1zM718 468h1v1h-1zM722 468h1v1h-1zM726 468h1v1h-1zM42 506h1v1h-1zM46 506h1v1h-1zM50 506h1v1h-1zM54 506h1v1h-1zM58 506h1v1h-1zM62 506h1v1h-1zM66 506h1v1h-1zM70 506h1v1h-1zM74 506h1v1h-1zM78 506h1v1h-1zM82 506h1v1h-1zM86 506h1v1h-1zM90 506h1v1h-1zM94 506h1v1h-1zM98 506h1v1h-1zM102 506h1v1h-1zM106 506h1v1h-1zM110 506h1v1h-1zM114 506h1v1h-1zM118 506h1v1h-1zM122 506h1v1h-1zM126 506h1v1h-1zM130 506h1v1h-1zM134 506h1v1h-1zM138 506h1v1h-1zM142 506h1v1h-1zM146 506h1v1h-1zM150 506h1v1h-1zM154 506h1v1h-1zM158 506h1v1h-1zM162 506h1v1h-1zM166 506h1v1h-1zM170 506h1v1h-1zM174 506h1v1h-1zM178 506h1v1h-1zM182 506h1v1h-1zM186 506h1v1h-1zM190 506h1v1h-1zM194 506h1v1h-1zM198 506h1v1h-1zM202 506h1v1h-1zM206 506h1v1h-1zM210 506h1v1h-1zM214 506h1v1h-1zM218 506h1v1h-1zM222 506h1v1h-1zM226 506h1v1h-1zM230 506h1v1h-1zM234 506h1v1h-1zM238 506h1v1h-1zM242 506h1v1h-1zM246 506h1v1h-1zM250 506h1v1h-1zM254 506h1v1h-1zM258 506h1v1h-1zM262 506h1v1h-1zM266 506h1v1h-1zM270 506h1v1h-1zM274 506h1v1h-1zM278 506h1v1h-1zM282 506h1v1h-1zM286 506h1v1h-1zM290 506h1v1h-1zM294 506h1v1h-1zM298 506h1v1h-1zM302 506h1v1h-1zM306 506h1v1h-1zM310 506h1v1h-1zM314 506h1v1h-1zM318 506h1v1h-1zM322 506h1v1h-1zM326 506h1v1h-1zM330 506h1v1h-1zM334 506h1v1h-1zM338 506h1v1h-1zM342 506h1v1h-1zM346 506h1v1h-1zM350 506h1v1h-1zM354 506h1v1h-1zM358 506h1v1h-1zM362 506h1v1h-1zM366 506h1v1h-1zM370 506h1v1h-1zM374 506h1v1h-1zM378 506h1v1h-1zM382 506h1v1h-1zM386 506h1v1h-1zM390 506h1v1h-1zM394 506h1v1h-1zM398 506h1v1h-1zM402 506h1v1h-1zM406 506h1v1h-1zM410 506h1v1h-1zM414 506h1v1h-1zM418 506h1v1h-1zM422 506h1v1h-1zM426 506h1v1h-1zM430 506h1v1h-1zM434 506h1v1h-1zM438 506h1v1h-1zM442 506h1v1h-1zM446 506h1v1h-1zM450 506h1v1h-1zM454 506h1v1h-1zM458 506h1v1h-1zM462 506h1v1h-1zM466 506h1v1h-1zM470 506h1v1h-1zM474 506h1v1h-1zM478 506h1v1h-1zM482 506h1v1h-1zM486 506h1v1h-1zM490 506h1v1h-1zM494 506h1v1h-1zM498 506h1v1h-1zM502 506h1v1h-1zM506 506h1v1h-1zM510 506h1v1h-1zM514 506h1v1h-1zM518 506h1v1h-1zM522 506h1v1h-1zM526 506h1v1h-1zM530 506h1v1h-1zM534 506h1v1h-1zM538 506h1v1h-1zM542 506h1v1h-1zM546 506h1v1h-1zM550 506h1v1h-1zM554 506h1v1h-1zM558 506h1v1h-1zM562 506h1v1h-1zM566 506h1v1h-1zM570 506h1v1h-1zM574 506h1v1h-1zM578 506h1v1h-1zM582 506h1v1h-1zM586 506h1v1h-1zM590 506h1v1h-1zM594 506h1v1h-1zM598 506h1v1h-1zM602 506h1v1h-1zM606 506h1v1h-1zM610 506h1v1h-1zM614 506h1v1h-1zM618 506h1v1h-1zM622 506h1v1h-1zM626 506h1v1h-1zM630 506h1v1h-1zM634 506h1v1h-1zM638 506h1v1h-1zM642 506h1v1h-1zM646 506h1v1h-1zM650 506h1v1h-1zM654 506h1v1h-1zM658 506h1v1h-1zM662 506h1v1h-1zM666 506h1v1h-1zM670 506h1v1h-1zM674 506h1v1h-1zM678 506h1v1h-1zM682 506h1v1h-1zM686 506h1v1h-1zM690 506h1v1h-1zM694 506h1v1h-1zM698 506h1v1h-1zM702 506h1v1h-1zM706 506h1v1h-1zM710 506h1v1h-1zM714 506h1v1h-1zM718 506h1v1h-1zM722 506h1v1h-1zM726 506h1v1h-1z" fill="#a0a0a0" shape-rendering="crispEdges"/>
<g fill="none" stroke-linejoin="round">
<path d="M42 386 L48 385.5 L52 384.5 L58 383.5 L65 383 L73 383 L75 386 L78 393 L81 399 L84 403.5 L88 407 L92 409.5 L95 411 L98 411 L100 409 L102 407 L106 406.5 L110 406.5 L116 406.5 L119 405 L122 403 L126 402 L130 402 L134 402 L137 400 L140 396.5 L143 393 L146 390 L149 388 L152 388.5 L155 390 L158 393.5 L161 398 L164 403 L166 406 L170 407 L175 407 L177 403 L179 399 L182 394 L185 389 L188 385.5 L191 384 L196 383.5 L202 383.5 L205 385 L209 387 L212 388 L215 389 L217 391 L220 392.5 L224 393 L227 393 L229 392 L234 392 L237 393 L240 395 L243 398 L246 400 L249 402 L252 404 L256 405.5 L259 407 L262 409 L266 411 L270 412.5 L276 412.5 L279 411 L283 409 L286 407.5 L288 405.5 L290 404 L296 404 L299 404.5 L302 404.5 L304 404 L306 405.5 L312 405.5 L314 404 L316 401 L319 398.5 L322 396 L325 392.5 L327 389.5 L330 386.5 L333 385.5 L336 386 L338 387 L344 387 L347 386.5 L352 386.5 L356 388 L360 389.5 L363 391.5 L367 392.5 L369 395 L371 398 L373 401 L376 403.5 L380 404.5 L385 404.5 L388 404.5 L390 406 L393 407 L396 408 L399 409.5 L402 411 L405 412.5 L410 412.5 L416 412.5 L419 411.5 L421 409.5 L423 407.5 L425 406 L430 406 L436 406 L439 407 L442 408 L448 408 L451 407 L454 405.5 L456 403.5 L458 401.5 L461 399.5 L464 398.5 L468 398 L471 397 L473 395.5 L476 394.5 L479 396 L481 399.5 L483 402.5 L485 405.5 L487 407.5 L490 408 L493 407 L495 405.5 L497 403 L499 399 L501 394 L503 391 L506 388.5 L509 387 L513 386.5 L517 385.5 L521 384 L526 383 L540 383 L556 383 L562 383 L566 384 L570 385 L573 386.5 L577 386.5 L580 388 L583 389.5 L587 390 L591 390 L594 389 L597 388.5 L600 387 L603 386.5 L605 387 L607 389.5 L609 394 L611 398 L613 402 L615 405 L617 408 L619 410.5 L621 412.5 L626 413 L634 413.5 L642 413.5 L645 413 L647 411.5 L650 411.5 L654 411.5 L656 412.5 L664 412.5 L670 412.5 L672 413.5 L680 414 L688 415 L692 414.5 L695 413.5 L698 413 L700 412.5 L702 413.5 L706 414 L710 413.5 L712 412.5 L714 411.5 L716 412 L718 413 L722 413 L729 413" stroke="#0000ff" stroke-width="2.2"/>
<path d="M42 383 L50 383 L60 382.5 L65 382 L68 382.5 L73 382.5 L75 385 L77 390 L79 395 L82 400 L85 404 L88 407 L92 409.5 L96 411 L100 412 L108 412.5 L116 413 L122 413 L126 412 L130 411 L134 410 L137 408 L139 405 L141 402 L143 398 L145 394.5 L147 392 L150 389.5 L153 388 L156 388 L159 389.5 L162 392 L165 395.5 L168 398.5 L171 401 L174 402.5 L178 402.5 L181 401 L184 397.5 L187 394 L190 391 L193 388.5 L196 387 L200 385.5 L204 384.5 L210 384 L214 385 L218 386.5 L222 388 L226 389.5 L230 391 L234 392 L237 393.5 L239 396 L241 399 L244 402.5 L247 406 L250 408.5 L254 411 L258 412 L264 413 L270 414 L278 414 L282 413 L286 411.5 L290 410 L293 408 L296 406 L300 403 L304 399.5 L308 396 L311 393 L314 390.5 L317 388.5 L321 387.5 L325 386 L328 385 L332 384 L340 384 L354 384 L358 385.5 L362 387 L366 388 L369 390 L371 393 L373 396.5 L376 400 L379 403 L382 405.5 L386 408 L390 410 L394 411.5 L400 413 L406 413.5 L414 413.5 L420 413 L424 412 L428 410 L432 408.5 L435 407 L438 405.5 L442 404.5 L445 403.5 L448 402 L450 399.5 L453 396 L456 392.5 L459 390 L462 388 L466 386.5 L470 385 L475 384.5 L479 385.5 L482 388 L485 392 L488 395.5 L491 399 L494 399 L497 399 L499 396 L501 392.5 L503 390 L506 388 L510 386.5 L514 385.5 L518 384.5 L522 383.5 L526 383 L540 383 L554 383 L558 382 L562 383 L566 384.5 L569 386.5 L572 389.5 L574 392.5 L576 396 L578 399.5 L581 403 L584 406 L587 408.5 L590 410 L594 411.5 L600 411.5 L606 411.5 L610 412.5 L618 413.5 L626 414 L636 414.5 L644 415 L650 414 L660 414 L670 414 L682 414 L684 415 L688 415 L690 413.5 L692 412.5 L694 410 L696 406.5 L698 403 L700 400.5 L702 399 L704 398.5 L706 400 L709 400 L711 398 L713 395.5 L715 395 L717 395.5 L720 396 L724 396 L727 395 L729 395" stroke="#90ee90" stroke-width="2.2"/>
<path d="M42 384 L73 383 L76 386 L79 391 L82 396 L85 400.5 L88 404 L92 407.5 L96 410 L100 411.5 L108 412.5 L118 413.5 L124 413.5 L130 412 L134 411 L138 409 L141 406 L144 402 L147 398 L150 394.5 L153 392 L156 390.5 L160 390 L164 390.5 L168 392 L171 394 L174 397 L177 399.5 L180 400.5 L184 400.5 L188 400 L190 399 L193 396 L196 392.5 L199 390 L202 388 L206 386.5 L210 385.5 L214 385.5 L220 386.5 L226 388 L232 390 L236 391.5 L239 393.5 L242 397 L245 400 L248 403 L252 406.5 L256 409 L260 411 L266 412.5 L272 413.5 L280 414 L286 413 L290 411.5 L294 409.5 L298 407 L302 404 L306 401 L310 398 L314 395 L318 392 L322 389.5 L326 387.5 L330 386 L336 385 L344 384.5 L354 384 L360 385 L366 386.5 L370 388.5 L372 391.5 L374 394 L377 398 L380 401 L383 403.5 L386 406 L390 408.5 L394 410.5 L398 412 L404 413 L412 414 L420 414 L426 413.5 L430 412 L434 410 L438 407.5 L442 406 L446 405 L449 403.5 L452 400.5 L455 397 L458 394 L462 391.5 L466 389.5 L470 388 L474 386.5 L478 385 L482 385 L485 386 L487 388 L489 390.5 L491 393 L493 394.5 L496 395 L500 395 L504 395 L508 395 L510 394 L512 392.5 L515 390 L518 388 L521 386.5 L525 385.5 L530 384.5 L536 383.5 L544 383 L556 383 L562 383 L566 384 L570 385.5 L573 388 L576 391 L578 394 L580 397 L583 400.5 L586 404 L589 406.5 L592 408.5 L595 410 L598 411 L604 411.5 L610 412.5 L620 413.5 L630 414 L640 414.5 L648 415 L652 414.5 L660 414.5 L670 414.5 L680 414.5 L688 415 L691 414 L693 412.5 L695 410.5 L697 408 L699 405.5 L701 403.5 L704 402 L708 401 L711 400.5 L713 399 L716 398 L719 397.5 L724 397.5 L728 397.5" stroke="#87cefa" stroke-width="1.25"/>
<path d="M42 442 L44 442 L46 442.375 L48 442.688 L50 442.281 L52 441.562 L54 440.625 L56 439.438 L58 438.031 L60 436.458 L62 435 L64 433.917 L66 433.208 L68 432.75 L70 432.792 L72 433.292 L74 433.75 L76 434.146 L78 436.688 L80 441.875 L82 447.25 L84 452.25 L86 456.875 L88 460.625 L90 463.188 L92 464.688 L94 465.625 L96 466.25 L98 466.312 L100 465.25 L102 463.125 L104 460.688 L106 458.562 L108 457 L110 456.375 L112 457.125 L114 458.479 L116 459.25 L118 459.646 L120 457.938 L122 453.938 L124 449.688 L126 445.625 L128 442.5 L130 441.062 L132 441.562 L134 442.667 L136 443.25 L138 443.271 L140 442.312 L142 440.688 L144 439.125 L146 437.812 L148 437.312 L150 438 L152 439.188 L154 440.438 L156 442.062 L158 444.188 L160 447 L162 450.75 L164 455.125 L166 459.062 L168 461.5 L170 462.375 L172 462.375 L174 461.562 L176 459.5 L178 456.312 L180 452.438 L182 448.125 L184 443.688 L186 439.688 L188 436.75 L190 435.021 L192 434.25 L194 434.104 L196 434.208 L198 434.375 L200 434.479 L202 434.5 L204 434.5 L206 434.875 L208 435.792 L210 437 L212 438.208 L214 439.292 L216 440.5 L218 442.083 L220 444.083 L222 446.5 L224 449.479 L226 452.688 L228 455.562 L230 457.375 L232 457.375 L234 456.312 L236 455.375 L238 454.792 L240 454.75 L242 455.708 L244 457.312 L246 458.438 L248 458.75 L250 458.125 L252 456.562 L254 454.938 L256 453.75 L258 452.875 L260 452.312 L262 452.5 L264 453.75 L266 455.875 L268 458.25 L270 460.062 L272 461.167 L274 461.75 L276 461.833 L278 461.438 L280 460.312 L282 458.5 L284 456.562 L286 454.938 L288 453.75 L290 452.75 L292 451.75 L294 450.792 L296 450 L298 449.708 L300 449.875 L302 450 L304 449.875 L306 449.583 L308 449.25 L310 449.292 L312 449.625 L314 449 L316 446.688 L318 443.438 L320 440.375 L322 438.062 L324 436.479 L326 435.5 L328 435.083 L330 435 L332 434.906 L334 434.688 L336 434.719 L338 435.688 L340 437.125 L342 438.438 L344 439.312 L346 439.417 L348 439 L350 438.458 L352 438.167 L354 438.25 L356 439.021 L358 440.562 L360 442.5 L362 444.5 L364 446.5 L366 448.5 L368 450.5 L370 452.688 L372 455.125 L374 457.625 L376 460.125 L378 462.25 L380 462.375 L382 460 L384 457 L386 454.75 L388 453.875 L390 454.688 L392 456.312 L394 457.688 L396 458.75 L398 459.938 L400 461.188 L402 462.25 L404 463.25 L406 464.25 L408 465.062 L410 465.25 L412 464.688 L414 464.25 L416 464.375 L418 464.5 L420 463.938 L422 462.25 L424 459.688 L426 456.75 L428 454.312 L430 453.375 L432 453.812 L434 454.5 L436 454.917 L438 455.25 L440 455.583 L442 456 L444 456.75 L446 457.562 L448 457.75 L450 457 L452 455.812 L454 454.875 L456 454.083 L458 453 L460 451.604 L462 450.312 L464 449.438 L466 449.188 L468 449.458 L470 450 L472 450.042 L474 448.312 L476 444.938 L478 441.75 L480 440.812 L482 442.625 L484 446.438 L486 451.438 L488 457.062 L490 463.062 L492 465.25 L494 463.062 L496 460.062 L498 455.938 L500 450.438 L502 444.312 L504 439.312 L506 436 L508 434.125 L510 434.125 L512 435.188 L514 436.25 L516 437.25 L518 437.875 L520 437.625 L522 436.562 L524 435.125 L526 433.812 L528 433.125 L530 433.188 L532 433.531 L534 433.812 L536 434.062 L538 434.312 L540 434.562 L542 434.812 L544 434.875 L546 434.688 L548 434.344 L550 433.875 L552 433.469 L554 433.188 L556 432.938 L558 432.688 L560 432.531 L562 432.5 L564 432.875 L566 434.125 L568 436 L570 437.812 L572 439.375 L574 440.562 L576 441.292 L578 441.75 L580 442.521 L582 444.062 L584 445.5 L586 446.333 L588 447 L590 447.667 L592 448.375 L594 449.25 L596 450.125 L598 450.625 L600 450.125 L602 448.562 L604 446.938 L606 445.812 L608 445.688 L610 448.625 L612 453.688 L614 458.25 L616 461.938 L618 464.25 L620 465 L622 465 L624 464.938 L626 464.792 L628 464.625 L630 464.427 L632 464.188 L634 464.156 L636 464.458 L638 465 L640 465.51 L642 465.812 L644 465.875 L646 465.688 L648 465.156 L650 464.25 L652 463.25 L654 462.375 L656 461.833 L658 462 L660 462.51 L662 462.812 L664 462.719 L666 462.125 L668 461.25 L670 460.438 L672 460.438 L674 461.438 L676 462.875 L678 464.062 L680 464.75 L682 465 L684 465.188 L686 465.625 L688 465.938 L690 466 L692 465.812 L694 465.375 L696 464.812 L698 464.167 L700 463.5 L702 462.958 L704 462.708 L706 463 L708 463.667 L710 464.292 L712 464.75 L714 464.583 L716 463.562 L718 462.688 L720 462.875 L722 463.5 L724 463.875 L726 464 L728 463.75" stroke="#2f4f4f" stroke-width="1.2"/>
<path d="M42 446 L44 446 L46 445.25 L48 443.5 L50 441.5 L52 439.688 L54 438.125 L56 437.062 L58 436.5 L60 435.75 L62 434.875 L64 434.25 L66 434 L68 434.042 L70 434.25 L72 434.833 L74 435.188 L76 435.438 L78 439.875 L80 447.75 L82 454.5 L84 460.5 L86 465.875 L88 468 L90 467.5 L92 467.042 L94 466.5 L96 466.271 L98 465.5 L100 462.812 L102 458.625 L104 453.375 L106 447.875 L108 443.875 L110 441.688 L112 442.312 L114 445 L116 446.688 L118 447.125 L120 446.188 L122 443.688 L124 440.688 L126 439 L128 439.438 L130 441.312 L132 443.375 L134 444.812 L136 446.062 L138 446.875 L140 445.875 L142 443.375 L144 441 L146 439.188 L148 438.438 L150 439.688 L152 442.625 L154 446.188 L156 450 L158 454.062 L160 458.188 L162 460.438 L164 461.312 L166 462.625 L168 463.5 L170 463.792 L172 463.5 L174 461.583 L176 457.625 L178 452.75 L180 447.562 L182 442.5 L184 438.438 L186 436 L188 434.792 L190 434 L192 433.396 L194 434.188 L196 436.188 L198 437.562 L200 438.333 L202 439 L204 439.542 L206 440.125 L208 441.75 L210 445.125 L212 449.688 L214 454.25 L216 458 L218 460.812 L220 462.938 L222 464.562 L224 465.875 L226 465.812 L228 462.75 L230 457.062 L232 451.188 L234 446.75 L236 443.875 L238 443.438 L240 445.562 L242 449.062 L244 451.875 L246 453.062 L248 453.25 L250 451.75 L252 449.375 L254 447.625 L256 446.125 L258 444.812 L260 444.5 L262 445.625 L264 447.875 L266 451.125 L268 454.625 L270 457.562 L272 459.938 L274 461.438 L276 461.375 L278 459.75 L280 457.188 L282 454.062 L284 450.812 L286 448.125 L288 446.188 L290 444.625 L292 443.688 L294 443.688 L296 444.688 L298 446.688 L300 448.938 L302 450.438 L304 451.312 L306 452.438 L308 454.438 L310 457.438 L312 459.375 L314 457.75 L316 453.5 L318 448.438 L320 443.375 L322 439.188 L324 436.354 L326 435 L328 434.49 L330 434.188 L332 433.938 L334 433.688 L336 433.719 L338 435.625 L340 439.25 L342 443.062 L344 446.438 L346 447.812 L348 447.25 L350 446.438 L352 446.625 L354 448.25 L356 450.812 L358 453.75 L360 456.75 L362 459.562 L364 461.75 L366 463.375 L368 464.688 L370 465.625 L372 466 L374 465.625 L376 464.938 L378 464.188 L380 461.938 L382 457.688 L384 452.938 L386 448.938 L388 446.688 L390 447.5 L392 450.5 L394 453.375 L396 455.875 L398 458.188 L400 459.75 L402 460.75 L404 461.75 L406 462.75 L408 463.562 L410 463.5 L412 462.438 L414 461.312 L416 460.812 L418 460.938 L420 460.062 L422 456.875 L424 452.312 L426 447.75 L428 444.062 L430 443 L432 444.688 L434 447.125 L436 449.625 L438 451.938 L440 454 L442 456.188 L444 458.625 L446 459.25 L448 456.625 L450 452.562 L452 448.875 L454 446.5 L456 445.062 L458 443.25 L460 441.625 L462 441.625 L464 443.062 L466 445.188 L468 448 L470 451.375 L472 454.875 L474 455.938 L476 453.562 L478 450.5 L480 449.375 L482 451.125 L484 454.75 L486 459.312 L488 463.875 L490 466.125 L492 465.375 L494 463.125 L496 459.5 L498 453.625 L500 446 L502 439.125 L504 434.875 L506 433.062 L508 432.938 L510 433.938 L512 435.562 L514 437.688 L516 440.125 L518 442 L520 441.875 L522 440.312 L524 438.375 L526 435.875 L528 433.75 L530 433.125 L532 433.812 L534 435.062 L536 436.188 L538 436.938 L540 437.938 L542 439.812 L544 441.812 L546 442.625 L548 441.75 L550 439.188 L552 435.667 L554 433.5 L556 432.99 L558 432.688 L560 432.625 L562 432.812 L564 433.719 L566 436.062 L568 439.562 L570 443.5 L572 447.125 L574 449.875 L576 451.625 L578 452.562 L580 453.688 L582 455.688 L584 457.562 L586 458.375 L588 458.125 L590 456.875 L592 455.188 L594 453.812 L596 452.75 L598 451.938 L600 451.375 L602 450.688 L604 450 L606 449.562 L608 449.562 L610 451.625 L612 456.25 L614 460.812 L616 463.646 L618 465 L620 465.323 L622 465.188 L624 464.75 L626 464.062 L628 463.219 L630 462.292 L632 461.5 L634 461.208 L636 461.406 L638 461.688 L640 461.875 L642 461.812 L644 461.51 L646 461 L648 459.646 L650 454.812 L652 450 L654 449.938 L656 451.812 L658 454.375 L660 457.625 L662 459.583 L664 459.75 L666 459.167 L668 458.25 L670 457.25 L672 456.75 L674 457.125 L676 458.562 L678 460.812 L680 462.833 L682 464 L684 464.604 L686 465.125 L688 465.344 L690 465.188 L692 464.281 L694 462.125 L696 459.25 L698 456.438 L700 454.25 L702 453 L704 452.938 L706 454.312 L708 456.812 L710 459.562 L712 461.188 L714 460.375 L716 458.125 L718 457.125 L720 458.312 L722 460.25 L724 461.438 L726 461.833 L728 461.75" stroke="#006400" stroke-width="1" stroke-dasharray="4,3"/>
<path d="M42 442 L44 443 L46 442.5 L50 441 L54 438.5 L57 436 L60 434 L63 433 L66 432.5 L69 433.5 L72 434 L74 434.5 L75 437 L76 441 L78 446 L80 451 L82 456 L84 460 L86 463 L88 464.5 L90 465.5 L93 466.5 L95 466.5 L97 465 L99 462.5 L101 460 L103 458 L105 456.5 L107 456 L109 457.5 L111 459 L114 459.5 L116 460 L117 457 L119 453 L121 448.5 L123 444.5 L125 441.5 L127 440.5 L129 442 L131 443 L134 443.5 L136 443 L138 441 L140 439.5 L142 438 L144 437 L146 437.5 L148 439 L150 440 L152 441.5 L154 443.5 L156 446 L158 449.5 L160 454 L162 458.5 L164 461.5 L166 462.5 L169 462.5 L171 461.5 L173 459 L175 455.5 L177 451.5 L179 447 L181 442.5 L183 438.5 L185 436 L187 434.5 L190 434 L196 434.5 L202 434.5 L205 436 L208 438 L211 439.5 L214 441.5 L217 444.5 L220 448.5 L222 452 L224 455 L226 457.5 L228 458 L230 456.5 L232 455.5 L235 454.5 L238 455 L240 457 L242 458.5 L245 459 L247 458 L249 456 L251 454.5 L254 453 L257 452 L259 452.5 L261 454 L263 456.5 L265 459 L267 460.5 L269 461.5 L272 462 L275 461.5 L277 460 L279 458 L281 456 L283 454.5 L285 453.5 L288 452 L291 450.5 L294 449.5 L297 450 L300 450 L303 449.5 L306 449 L309 450 L311 449 L313 446 L315 442.5 L317 439.5 L319 437.5 L321 436 L324 435 L328 435 L332 434.5 L334 435 L336 437 L338 438 L340 439.5 L343 439.5 L346 438.5 L349 438 L352 438.5 L354 440 L356 442 L358 444 L360 446 L362 448 L364 450 L366 452 L368 454.5 L370 457 L372 459.5 L374 462 L376 463.5 L378 461 L380 457.5 L382 455 L384 453.5 L386 454 L388 456 L390 457.5 L392 458.5 L394 459.5 L396 461 L398 462 L400 463 L402 464 L404 465 L406 465.5 L408 465 L410 464 L413 464.5 L416 464.5 L418 463 L420 460.5 L422 457.5 L424 454.5 L426 453 L428 453.5 L430 454.5 L433 455 L436 455.5 L439 456 L442 457.5 L444 458 L446 457.5 L448 456 L450 455 L453 454 L456 452 L458 450.5 L460 449.5 L462 449 L465 449.5 L468 450.5 L470 449.5 L472 446 L474 442 L476 440 L478 441.5 L480 445 L482 450 L484 455.5 L486 461.5 L487 466.5 L489 465 L491 462.5 L493 459.5 L495 455 L497 449 L499 442.5 L500 440 L502 436.5 L504 434 L506 433.5 L508 435 L510 436 L512 437 L514 438 L516 438 L518 437 L520 435.5 L522 434 L524 433 L526 433 L528 433.5 L532 434 L536 434.5 L540 435 L544 434.5 L548 433.5 L552 433 L556 432.5 L560 432.5 L562 433.5 L564 435.5 L566 437.5 L568 439 L570 440.5 L573 441.5 L576 442 L578 443.5 L580 445.5 L583 446.5 L586 447.5 L589 448.5 L592 450 L595 451 L597 450 L599 448 L601 446.5 L603 445.5 L605 445 L606 447 L607 450 L609 455 L611 459.5 L613 463 L615 465 L620 465 L626 464.5 L630 464 L633 464.5 L636 465.5 L640 466 L644 465.5 L647 464 L650 462.5 L653 461.5 L656 462.5 L660 463 L663 462 L666 460.5 L668 460 L670 461 L672 462.5 L674 464 L677 465 L680 465 L684 466 L688 466 L692 465 L695 464 L698 463 L701 462.5 L704 463.5 L707 464.5 L710 465 L712 464 L714 462.5 L716 462.5 L718 463.5 L721 464 L724 464 L727 463 L729 462.5" stroke="#98fb98" stroke-width="2"/>
<path d="M42 446 L44 444 L46 442 L48 440 L50 438.5 L52 437 L55 436.5 L58 435 L61 434 L65 434 L68 434.5 L70 435.5 L72 435 L74 436 L75 441 L76 447 L78 453 L80 459 L82 465 L83 468 L84 468.5 L86 467.5 L89 467 L92 466 L94 466.5 L96 464 L98 460 L100 455 L102 449 L104 444 L106 442 L108 440.5 L109 443 L111 446 L113 447 L115 447.5 L117 446 L119 443 L121 439.5 L123 438.5 L125 439.5 L127 442 L129 444 L131 445 L133 446.5 L135 447.5 L137 445.5 L139 442.5 L141 440.5 L143 438.5 L145 438 L147 440 L149 443.5 L151 447 L153 451 L155 455 L157 459.5 L158 461 L160 460.5 L162 462.5 L164 463.5 L167 464 L170 463 L172 459 L174 454 L176 449 L178 443.5 L180 439 L182 436 L185 434.5 L188 433.5 L190 433 L192 436 L194 437.5 L197 438.5 L200 439.5 L203 440 L205 442 L207 446 L209 451 L211 455.5 L213 459 L215 461.5 L217 463.5 L219 465 L221 466 L222 467 L224 464.5 L226 459 L228 452 L230 447.5 L232 444 L234 442.5 L236 444.5 L238 448 L240 452 L242 453 L244 453.5 L246 453 L248 449.5 L250 448 L252 446.5 L254 445 L256 444 L258 445 L260 447 L262 450 L264 454 L266 457 L268 459.5 L270 461.5 L272 462 L274 460.5 L276 458 L278 455 L280 451.5 L282 448.5 L284 446.5 L286 445 L288 443.5 L290 443.5 L292 444 L294 446 L296 448.5 L298 450.5 L300 451 L302 452 L304 453.5 L306 456.5 L308 460 L309 460.5 L311 457 L313 452.5 L315 447 L317 442 L319 438 L321 435.5 L324 434.5 L328 434 L332 433.5 L334 434 L336 438.5 L338 442 L340 446 L342 448.5 L344 447.5 L346 446.5 L348 446 L350 447.5 L352 450 L354 453 L356 456 L358 459 L360 461.5 L362 463 L364 464.5 L367 466 L370 466 L372 465 L374 464.5 L376 463.5 L378 459 L380 454 L382 449.5 L384 446.5 L385 445.5 L387 448 L389 451.5 L391 454 L393 456.5 L395 459 L397 460 L399 461 L401 462 L403 463 L405 464 L407 463.5 L409 462 L411 461 L413 460.5 L415 461.5 L417 460 L419 456 L421 451 L423 446.5 L425 443 L426 442 L428 444 L430 446.5 L432 449 L434 451.5 L436 453.5 L438 455.5 L440 458 L442 460.5 L444 458 L446 453.5 L448 449.5 L450 446.5 L452 445.5 L454 444 L456 441.5 L458 441 L460 442.5 L462 444.5 L464 447 L466 450.5 L468 454 L470 457.5 L472 454.5 L474 451 L476 448.5 L478 450 L480 453.5 L482 458 L484 463 L486 467 L488 466 L490 464 L492 461 L494 456 L496 448 L498 440 L500 435 L502 433 L504 432.5 L506 433.5 L508 435 L510 437 L512 439.5 L514 442 L515 443 L517 441.5 L519 440 L521 438 L523 435 L525 433 L527 433 L529 434 L531 435.5 L533 436.5 L535 437 L537 438 L539 440.5 L541 442.5 L543 443 L545 441.5 L547 439 L548 436 L549 434 L552 433 L556 432.5 L560 433 L562 435 L564 438.5 L566 442.5 L568 446.5 L570 449.5 L572 451.5 L574 452.5 L576 453 L578 455 L580 457.5 L582 458.5 L584 458.5 L586 457.5 L588 455.5 L590 454 L592 453 L594 452 L596 451.5 L598 451 L600 450 L603 449.5 L605 449 L607 452 L609 458 L611 462 L613 464.5 L616 465.5 L620 465 L624 463.5 L627 462 L630 461 L633 461.5 L637 462 L641 461.5 L644 460.5 L646 458 L647 453 L648 449 L649 448.5 L651 450.5 L653 452 L655 455 L657 459 L659 460 L662 459.5 L665 458 L668 456.5 L671 457 L673 459 L675 461.5 L677 463.5 L680 464.5 L684 465.5 L688 465 L690 463 L692 460 L694 457 L696 454.5 L698 453 L700 452.5 L702 453.5 L704 456 L706 459 L708 461.5 L710 461.5 L712 458.5 L714 456.5 L716 457.5 L718 460 L720 461.5 L723 462 L726 461.5 L728 462 L729 462.5" stroke="#8c8c1e" stroke-width="1.2"/>
<path d="M42 498.5 L46 497 L50 496.5 L54 496.5 L57 494.5 L60 493.5 L64 493 L68 492 L72 491.5 L73 491 L74 495 L75 502 L77 505 L80 505.5 L84 505.5 L88 505.5 L90 506.5 L92 509 L94 511.5 L96 508 L98 506 L100 505 L102 504 L104 503.5 L106 504 L108 506 L110 508.5 L112 506 L114 504 L116 502.5 L118 504 L120 504.5 L122 502.5 L124 500 L126 501 L128 502.5 L130 502 L132 502 L134 500.5 L136 499.5 L138 498.5 L140 498 L142 499 L144 500 L146 501.5 L148 502 L150 502 L152 501 L153 500.5 L155 504 L157 506 L159 505.5 L161 507 L163 508.5 L165 509.5 L167 508 L169 506.5 L172 506 L174 505.5 L176 503.5 L178 500.5 L180 499 L182 497 L184 494.5 L186 492.5 L188 492 L190 493.5 L192 495 L194 495 L196 494.5 L198 493.5 L200 493 L202 493.5 L204 495 L206 497 L208 499 L210 499.5 L212 499 L214 500 L216 501 L218 502 L220 503 L222 503.5 L224 502.5 L226 500.5 L228 499.5 L230 499 L232 500 L235 500.5 L238 500.5 L240 503 L242 502.5 L244 501.5 L247 501 L250 501 L252 502.5 L254 502 L256 501 L258 501.5 L260 502.5 L262 504.5 L264 506.5 L266 508 L268 508.5 L270 508.5 L272 510 L274 509.5 L276 508.5 L278 508 L280 507 L282 507.5 L284 505.5 L286 504 L288 503 L290 503.5 L292 505.5 L294 506.5 L296 505.5 L298 504.5 L300 505 L302 506 L304 507 L306 508 L308 508.5 L310 506.5 L312 504 L314 502 L316 500.5 L320 500.5 L323 500.5 L325 499 L327 496.5 L329 492.5 L331 492 L333 492.5 L335 497 L337 498.5 L339 498 L341 496.5 L343 495.5 L344 495 L347 496 L350 497.5 L353 499 L356 499.5 L359 500 L362 501.5 L365 502 L368 502.5 L370 506 L372 510 L374 512.5 L375 511 L377 505 L379 501.5 L381 503 L383 505 L385 506 L387 505.5 L390 506 L393 506.5 L396 507 L399 507 L402 508.5 L404 509.5 L406 510 L408 509.5 L410 506.5 L412 510 L414 512 L416 513 L418 510.5 L420 507 L422 505 L424 506 L426 507.5 L428 508 L432 508 L436 508 L438 509 L440 509.5 L442 508.5 L444 507.5 L446 507.5 L448 508 L450 507.5 L452 506.5 L454 505.5 L456 504.5 L458 505.5 L462 505.5 L465 505.5 L467 506 L469 505 L471 503.5 L473 502.5 L475 503.5 L477 505 L479 507 L481 507.5 L483 508 L485 509.5 L487 511 L489 509.5 L491 507.5 L493 506 L495 504.5 L497 503 L499 501 L500 499.5 L502 498.5 L504 497.5 L506 496.5 L508 498 L510 498.5 L512 497.5 L514 498.5 L516 497 L518 495 L520 493 L522 492 L524 491.5 L527 491.5 L530 492.5 L532 493.5 L534 492.5 L536 491.5 L538 492 L540 493 L542 492 L544 491 L546 490 L549 489.5 L552 489 L555 488 L558 487 L561 486.5 L563 487 L565 490.5 L567 492 L569 492.5 L571 491.5 L574 491.5 L576 493 L578 495.5 L580 498 L581 498.5 L583 497.5 L585 496 L588 495.5 L591 495 L594 494.5 L596 495.5 L598 493.5 L599 492.5 L601 494 L603 495.5 L605 496 L606 497 L607 501.5 L608 505.5 L610 507 L613 506.5 L616 506.5 L618 507 L620 508.5 L622 509.5 L625 509 L628 509.5 L629 512 L631 513 L634 512.5 L637 512.5 L639 514 L641 512.5 L643 511 L645 509.5 L647 508.5 L648 508 L650 510.5 L652 512.5 L654 511.5 L656 511 L659 511 L662 510 L665 509.5 L668 510 L670 511 L672 512.5 L674 514 L677 514.5 L680 515 L683 515.5 L685 516 L687 517 L688 517.5 L690 516.5 L692 515.5 L695 515.5 L698 515.5 L701 515.5 L703 516.5 L705 518 L707 519 L708 518 L709 515 L710 513.5 L712 512.5 L713 512 L714 514 L716 517.5 L718 519.5 L720 520 L722 519 L724 517.5 L726 516.5 L728 517 L729 517.5" stroke="#e6be8c" stroke-width="1.25"/>
<path d="M42 503.5 L44 504.5 L46 505 L48 503.5 L50 505 L52 506.5 L54 504 L56 501 L58 499 L60 498 L62 497 L64 495.5 L66 497.5 L68 498.5 L70 498 L72 496.5 L73 496.5 L74 500 L75 506 L77 508 L80 509.5 L83 510.5 L86 510.5 L88 512 L90 514.5 L92 517 L94 520 L96 518.5 L98 516.5 L100 516 L102 515.5 L104 514.5 L106 510.5 L107 508 L109 509.5 L111 511.5 L113 508.5 L115 506 L117 504.5 L119 506 L120 507.5 L122 504 L124 499.5 L125 497.5 L127 501.5 L129 503 L131 503 L133 504 L134 504.5 L136 502.5 L138 500.5 L140 499 L141 497.5 L143 499 L145 501.5 L147 503 L149 503.5 L151 503.5 L153 504 L155 507.5 L157 510 L159 506.5 L160 508 L162 511.5 L164 513.5 L166 514.5 L169 514.5 L172 513.5 L175 513 L177 508.5 L179 504.5 L181 502.5 L183 499 L185 494.5 L187 490.5 L189 492 L190 492 L192 489.5 L194 487.5 L196 486.5 L198 486 L200 487 L202 488 L204 489.5 L206 493 L208 497 L210 499.5 L212 502 L214 505 L216 509 L218 511.5 L219 512.5 L222 511.5 L225 511 L227 510 L229 510 L231 511 L233 510 L235 508.5 L237 507.5 L239 508 L241 509 L243 508 L246 506.5 L249 505 L252 504.5 L254 504 L256 506 L258 508 L260 508.5 L262 509 L264 510.5 L266 511.5 L268 511.5 L270 511.5 L272 512.5 L274 513.5 L276 513 L278 512 L281 511.5 L284 511.5 L286 510.5 L288 509.5 L290 508.5 L292 509 L294 507.5 L296 506 L298 504.5 L300 503.5 L302 503 L304 503.5 L306 505 L308 506.5 L310 505.5 L312 503.5 L314 502 L316 503 L318 504.5 L320 505 L322 504 L324 502.5 L326 501.5 L328 499.5 L330 497.5 L332 496.5 L334 497 L336 499.5 L338 499 L340 498.5 L343 498.5 L346 499.5 L348 501 L351 501.5 L354 502.5 L357 503.5 L359 506 L361 508.5 L363 510 L365 509 L367 507.5 L369 508.5 L371 511 L373 513.5 L375 514 L377 512 L379 509.5 L381 509 L383 510 L385 511 L388 511 L392 510.5 L396 510.5 L400 510 L402 508 L404 506.5 L406 508 L408 510 L410 511.5 L412 512 L414 512.5 L416 512.5 L418 510 L420 508 L422 507.5 L424 508 L428 508.5 L432 508.5 L435 507.5 L437 508 L439 509 L441 509 L443 506.5 L445 505 L447 504.5 L449 506 L451 507 L453 508 L455 506.5 L457 505 L459 505.5 L462 505.5 L465 506 L467 506.5 L469 505.5 L471 504 L473 503 L475 504 L477 505.5 L479 507.5 L481 508 L483 507.5 L485 508.5 L487 509.5 L489 508.5 L491 507 L493 506.5 L495 506 L497 505 L500 504 L503 503.5 L506 503 L509 502 L512 501.5 L515 501 L517 499.5 L519 498 L521 497.5 L524 498 L527 498 L529 499.5 L531 501 L533 500.5 L535 500 L537 501 L540 501.5 L543 501 L545 499.5 L547 498 L549 499 L551 499.5 L554 500 L557 500 L559 499 L561 498 L563 498.5 L565 500.5 L567 502 L569 502 L571 500.5 L573 501 L575 503 L577 505 L579 506 L582 506 L585 506 L588 506.5 L591 507 L594 506.5 L596 505.5 L598 504.5 L600 504 L602 505 L605 505.5 L607 507.5 L609 509 L611 507.5 L613 507.5 L615 508.5 L617 509.5 L619 510.5 L622 511 L625 511 L628 511.5 L629 513.5 L631 515 L633 514.5 L636 514.5 L638 513 L639 511 L642 510.5 L644 510 L646 509 L648 507.5 L650 509 L652 510 L654 509 L656 509 L658 508 L661 507 L664 507 L667 507 L670 507 L672 509 L674 510 L677 510.5 L679 511 L681 509.5 L683 508 L685 509.5 L687 510.5 L690 510.5 L694 510.5 L698 510.5 L700 510 L702 509 L704 509 L706 508.5 L708 509 L710 508.5 L712 508 L714 507.5 L716 510 L718 512.5 L720 513.5 L722 512.5 L725 512.5 L728 513 L729 514" stroke="#6cf0cc" stroke-width="1.25"/>
</g>
<g shape-rendering="crispEdges"><path d="M44 550h1v10h-1zM47 549h1v11h-1zM50 548h1v12h-1zM53 546h1v14h-1zM56 544h1v16h-1zM59 543h1v17h-1zM62 542h1v18h-1zM65 542h1v18h-1zM68 542h1v18h-1zM72 541h1v19h-1zM75 549h1v11h-1zM78 554h1v6h-1zM81 558h1v2h-1zM121 556h1v4h-1zM124 556h1v4h-1zM127 557h1v3h-1zM130 557h1v3h-1zM133 555h1v5h-1zM137 552h1v8h-1zM140 551h1v9h-1zM143 550h1v10h-1zM146 551h1v9h-1zM149 553h1v7h-1zM152 552h1v8h-1zM155 557h1v3h-1zM158 558h1v2h-1zM180 554h1v6h-1zM183 547h1v13h-1zM186 541h1v19h-1zM189 540h1v20h-1zM192 540h1v20h-1zM195 540h1v20h-1zM198 538h1v22h-1zM202 540h1v20h-1zM205 543h1v17h-1zM208 546h1v14h-1zM211 548h1v12h-1zM214 551h1v9h-1zM217 554h1v6h-1zM220 557h1v3h-1zM223 558h1v2h-1zM226 556h1v4h-1zM229 556h1v4h-1zM232 556h1v4h-1zM236 557h1v3h-1zM316 559h1v1h-1zM319 557h1v3h-1zM322 556h1v4h-1zM325 554h1v6h-1zM328 549h1v11h-1zM332 546h1v14h-1zM335 547h1v13h-1zM338 547h1v13h-1zM341 546h1v14h-1zM344 545h1v15h-1zM347 545h1v15h-1zM350 547h1v13h-1zM353 549h1v11h-1zM356 550h1v10h-1zM359 551h1v9h-1zM363 553h1v7h-1zM366 554h1v6h-1zM369 557h1v3h-1zM502 558h1v2h-1zM505 556h1v4h-1zM508 556h1v4h-1zM511 555h1v5h-1zM514 555h1v5h-1zM517 554h1v6h-1zM520 552h1v8h-1zM524 551h1v9h-1zM527 550h1v10h-1zM530 550h1v10h-1zM533 550h1v10h-1zM536 549h1v11h-1zM539 550h1v10h-1zM542 550h1v10h-1zM545 548h1v12h-1zM548 547h1v13h-1zM551 546h1v14h-1zM554 546h1v14h-1zM558 545h1v15h-1zM561 545h1v15h-1zM564 546h1v14h-1zM567 547h1v13h-1zM570 548h1v12h-1zM573 548h1v12h-1zM576 550h1v10h-1zM579 552h1v8h-1zM582 552h1v8h-1zM585 553h1v7h-1zM589 552h1v8h-1zM592 552h1v8h-1zM595 553h1v7h-1zM598 552h1v8h-1zM601 553h1v7h-1zM604 553h1v7h-1zM607 556h1v4h-1zM610 558h1v2h-1zM613 559h1v1h-1z" fill="#00ff00"/><path d="M84 560h1v1h-1zM87 560h1v1h-1zM90 560h1v3h-1zM93 560h1v8h-1zM96 560h1v7h-1zM99 560h1v6h-1zM102 560h1v3h-1zM106 560h1v3h-1zM109 560h1v6h-1zM112 560h1v4h-1zM115 560h1v1h-1zM118 560h1v1h-1zM161 560h1v4h-1zM164 560h1v7h-1zM167 560h1v7h-1zM171 560h1v8h-1zM174 560h1v6h-1zM177 560h1v1h-1zM239 560h1v1h-1zM242 560h1v1h-1zM245 560h1v1h-1zM248 560h1v1h-1zM251 560h1v2h-1zM254 560h1v1h-1zM257 560h1v2h-1zM260 560h1v3h-1zM263 560h1v7h-1zM267 560h1v9h-1zM270 560h1v12h-1zM273 560h1v13h-1zM276 560h1v11h-1zM279 560h1v9h-1zM282 560h1v9h-1zM285 560h1v6h-1zM288 560h1v3h-1zM291 560h1v3h-1zM294 560h1v4h-1zM298 560h1v3h-1zM301 560h1v4h-1zM304 560h1v4h-1zM307 560h1v6h-1zM310 560h1v4h-1zM313 560h1v2h-1zM372 560h1v3h-1zM375 560h1v4h-1zM378 560h1v2h-1zM381 560h1v2h-1zM384 560h1v3h-1zM387 560h1v4h-1zM390 560h1v6h-1zM393 560h1v6h-1zM397 560h1v8h-1zM400 560h1v9h-1zM403 560h1v10h-1zM406 560h1v11h-1zM409 560h1v10h-1zM412 560h1v11h-1zM415 560h1v13h-1zM418 560h1v11h-1zM421 560h1v8h-1zM424 560h1v8h-1zM428 560h1v7h-1zM431 560h1v8h-1zM434 560h1v7h-1zM437 560h1v7h-1zM440 560h1v8h-1zM443 560h1v7h-1zM446 560h1v7h-1zM449 560h1v6h-1zM452 560h1v5h-1zM455 560h1v3h-1zM459 560h1v3h-1zM462 560h1v3h-1zM465 560h1v3h-1zM468 560h1v3h-1zM471 560h1v2h-1zM474 560h1v1h-1zM477 560h1v2h-1zM480 560h1v4h-1zM483 560h1v4h-1zM486 560h1v6h-1zM489 560h1v5h-1zM493 560h1v4h-1zM496 560h1v3h-1zM499 560h1v1h-1zM616 560h1v1h-1zM619 560h1v3h-1zM623 560h1v4h-1zM626 560h1v5h-1zM629 560h1v6h-1zM632 560h1v7h-1zM635 560h1v7h-1zM638 560h1v8h-1zM641 560h1v7h-1zM644 560h1v6h-1zM647 560h1v5h-1zM650 560h1v6h-1zM654 560h1v6h-1zM657 560h1v6h-1zM660 560h1v6h-1zM663 560h1v5h-1zM666 560h1v5h-1zM669 560h1v6h-1zM672 560h1v7h-1zM675 560h1v9h-1zM678 560h1v9h-1zM681 560h1v10h-1zM685 560h1v11h-1zM688 560h1v11h-1zM691 560h1v11h-1zM694 560h1v11h-1zM697 560h1v10h-1zM700 560h1v9h-1zM703 560h1v9h-1zM706 560h1v10h-1zM709 560h1v10h-1zM712 560h1v8h-1zM715 560h1v10h-1zM719 560h1v13h-1zM722 560h1v14h-1zM725 560h1v14h-1zM728 560h1v14h-1z" fill="#ff0000"/></g>
</svg>
</body></html>
